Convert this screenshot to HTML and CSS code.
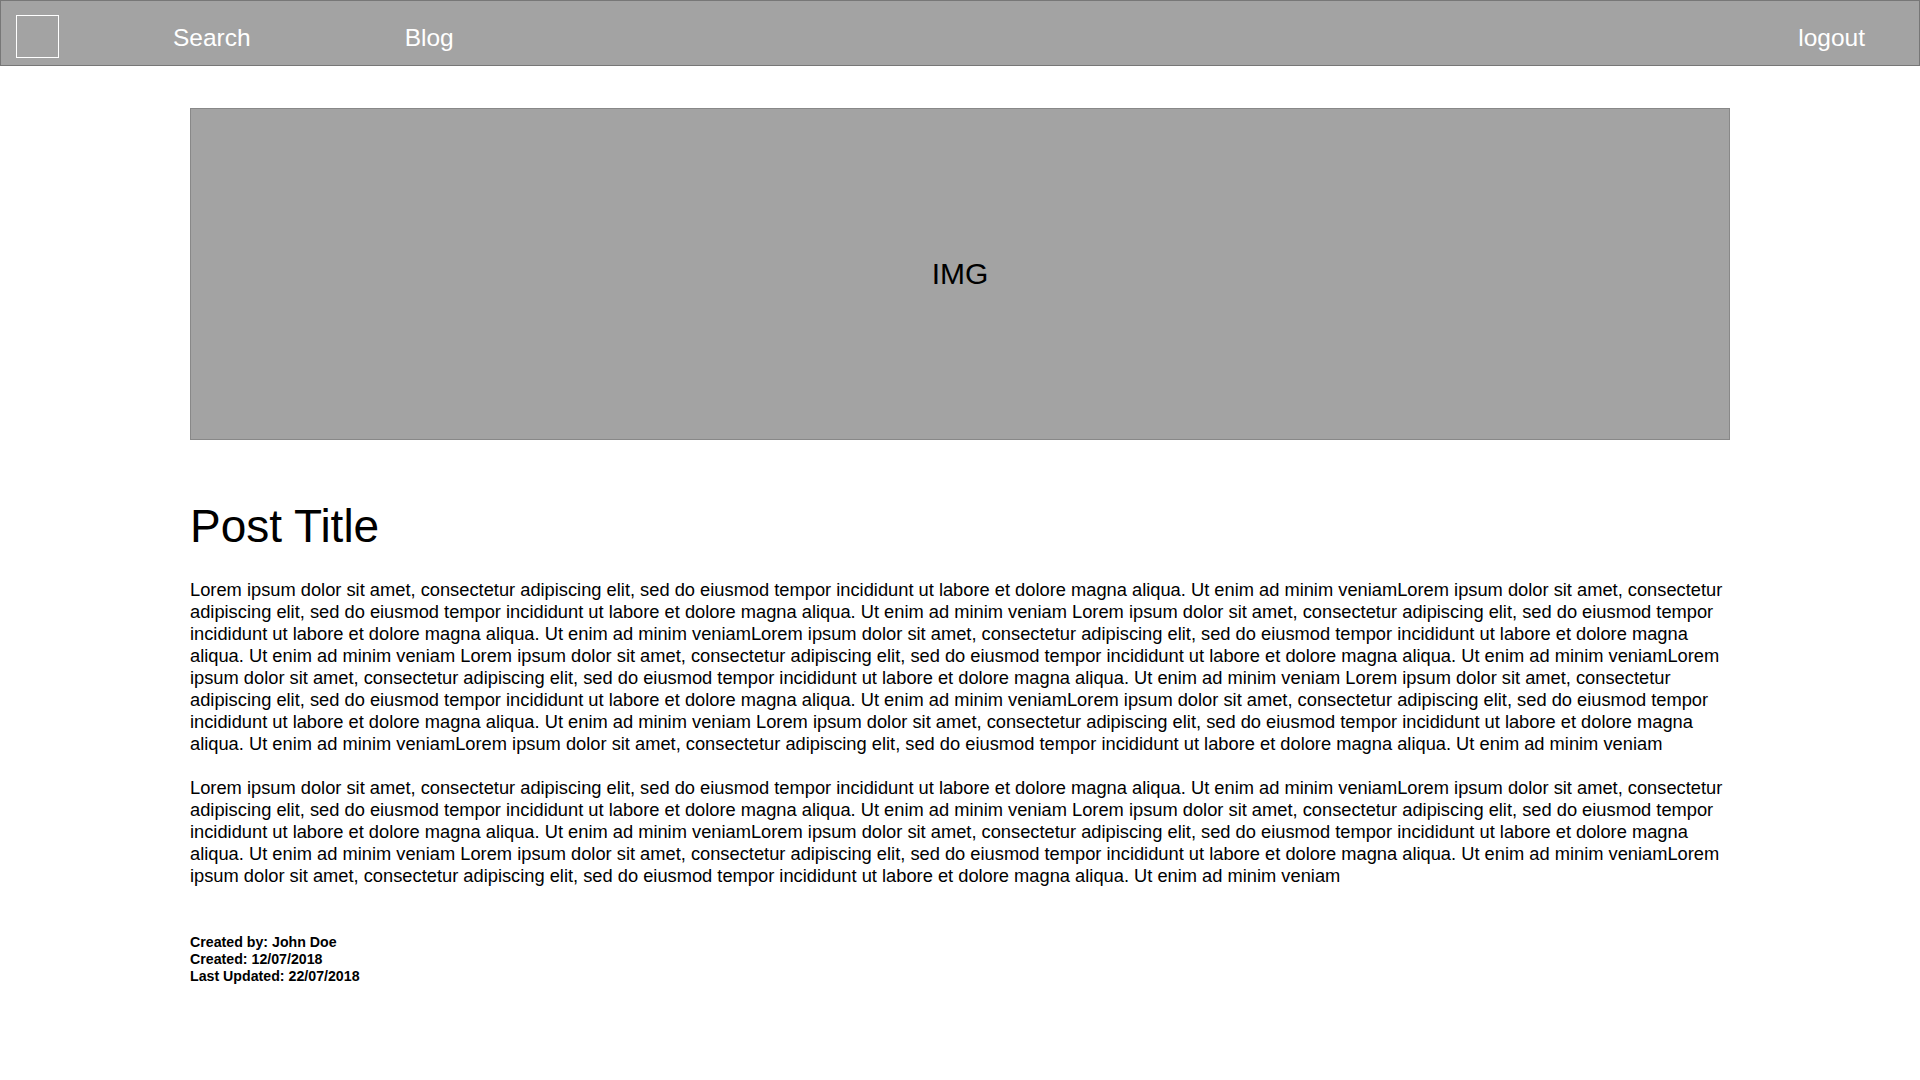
FILE: index.html
```html
<!DOCTYPE html>
<html lang="en">
<head>
<meta charset="utf-8">
<title>Post</title>
<link rel="stylesheet" href="styles.css">
</head>
<body>
<header class="nav">
  <div class="logo"></div>
  <nav class="nav-links">
    <a class="nav-link" href="#">Search</a>
    <a class="nav-link" href="#">Blog</a>
  </nav>
  <a class="nav-link logout" href="#">logout</a>
</header>
<main class="post">
  <div class="hero">IMG</div>
  <h1 class="post-title">Post Title</h1>
  <p class="post-text">Lorem ipsum dolor sit amet, consectetur adipiscing elit, sed do eiusmod tempor incididunt ut labore et dolore magna aliqua. Ut enim ad minim veniamLorem ipsum dolor sit amet, consectetur adipiscing elit, sed do eiusmod tempor incididunt ut labore et dolore magna aliqua. Ut enim ad minim veniam Lorem ipsum dolor sit amet, consectetur adipiscing elit, sed do eiusmod tempor incididunt ut labore et dolore magna aliqua. Ut enim ad minim veniamLorem ipsum dolor sit amet, consectetur adipiscing elit, sed do eiusmod tempor incididunt ut labore et dolore magna aliqua. Ut enim ad minim veniam Lorem ipsum dolor sit amet, consectetur adipiscing elit, sed do eiusmod tempor incididunt ut labore et dolore magna aliqua. Ut enim ad minim veniamLorem ipsum dolor sit amet, consectetur adipiscing elit, sed do eiusmod tempor incididunt ut labore et dolore magna aliqua. Ut enim ad minim veniam Lorem ipsum dolor sit amet, consectetur adipiscing elit, sed do eiusmod tempor incididunt ut labore et dolore magna aliqua. Ut enim ad minim veniamLorem ipsum dolor sit amet, consectetur adipiscing elit, sed do eiusmod tempor incididunt ut labore et dolore magna aliqua. Ut enim ad minim veniam Lorem ipsum dolor sit amet, consectetur adipiscing elit, sed do eiusmod tempor incididunt ut labore et dolore magna aliqua. Ut enim ad minim veniamLorem ipsum dolor sit amet, consectetur adipiscing elit, sed do eiusmod tempor incididunt ut labore et dolore magna aliqua. Ut enim ad minim veniam</p>
  <p class="post-text">Lorem ipsum dolor sit amet, consectetur adipiscing elit, sed do eiusmod tempor incididunt ut labore et dolore magna aliqua. Ut enim ad minim veniamLorem ipsum dolor sit amet, consectetur adipiscing elit, sed do eiusmod tempor incididunt ut labore et dolore magna aliqua. Ut enim ad minim veniam Lorem ipsum dolor sit amet, consectetur adipiscing elit, sed do eiusmod tempor incididunt ut labore et dolore magna aliqua. Ut enim ad minim veniamLorem ipsum dolor sit amet, consectetur adipiscing elit, sed do eiusmod tempor incididunt ut labore et dolore magna aliqua. Ut enim ad minim veniam Lorem ipsum dolor sit amet, consectetur adipiscing elit, sed do eiusmod tempor incididunt ut labore et dolore magna aliqua. Ut enim ad minim veniamLorem ipsum dolor sit amet, consectetur adipiscing elit, sed do eiusmod tempor incididunt ut labore et dolore magna aliqua. Ut enim ad minim veniam</p>
  <div class="meta">
    <div>Created by: John Doe</div>
    <div>Created: 12/07/2018</div>
    <div>Last Updated: 22/07/2018</div>
  </div>
</main>
</body>
</html>
```

FILE: styles.css
```css
* { box-sizing: border-box; }

html, body {
  margin: 0;
  padding: 0;
  background: #ffffff;
  font-family: "Liberation Sans", Arial, Helvetica, sans-serif;
  color: #000000;
}

.nav {
  display: flex;
  align-items: center;
  height: 66px;
  padding: 7px 54px 0 15px;
  background: #a3a3a3;
  border: 1px solid #777777;
}

.logo {
  width: 43px;
  height: 43px;
  border: 1px solid #ffffff;
  flex: none;
}

.nav-links {
  display: flex;
  gap: 154px;
  margin-left: 114px;
}

.nav-link {
  color: #ffffff;
  text-decoration: none;
  font-size: 24.5px;
  line-height: 28px;
  margin-top: 2px;
}

.logout {
  margin-left: auto;
}

.post {
  width: 1540px;
  margin: 42px 0 0 190px;
}

.hero {
  display: flex;
  align-items: center;
  justify-content: center;
  height: 332px;
  background: #a3a3a3;
  border: 1px solid #888888;
  font-size: 30px;
  color: #000000;
}

.post-title {
  margin: 60px 0 0;
  font-size: 46px;
  font-weight: normal;
  line-height: 52px;
}

.post-text {
  margin: 27px 0 0;
  font-size: 18.3px;
  line-height: 22px;
}

.post-text + .post-text {
  margin-top: 22px;
}

.meta {
  margin-top: 47px;
  font-size: 14.2px;
  font-weight: bold;
  line-height: 17px;
}
```
